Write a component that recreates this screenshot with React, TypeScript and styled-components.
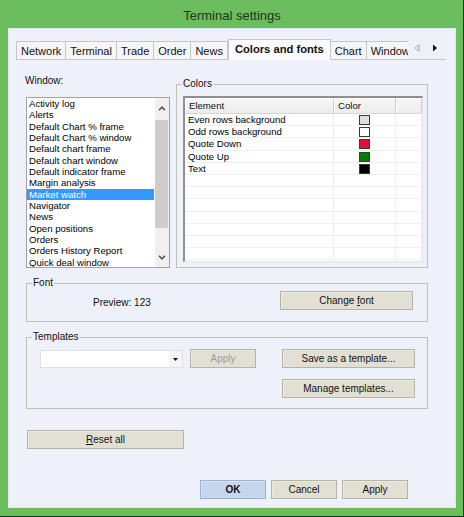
import React from "react";
import styled, { createGlobalStyle } from "styled-components";

const GlobalStyle = createGlobalStyle`
  html, body { margin: 0; padding: 0; background: #ffffff; }
  body { font-family: "Liberation Sans", Arial, sans-serif; }
  * { box-sizing: border-box; }
`;

const WINDOWS = [
  "Activity log",
  "Alerts",
  "Default Chart % frame",
  "Default Chart % window",
  "Default chart frame",
  "Default chart window",
  "Default indicator frame",
  "Margin analysis",
  "Market watch",
  "Navigator",
  "News",
  "Open positions",
  "Orders",
  "Orders History Report",
  "Quick deal window",
];

const TABS = ["Network", "Terminal", "Trade", "Order", "News", "Colors and fonts", "Chart", "Windows"];

const ELEMENTS = [
  { name: "Even rows background", color: "#dedede" },
  { name: "Odd rows background", color: "#ffffff" },
  { name: "Quote Down", color: "#dc143c" },
  { name: "Quote Up", color: "#007f00" },
  { name: "Text", color: "#000000" },
];

const Frame = styled.div`
  width: 464px;
  height: 517px;
  background: #6cbd5e;
  border-right: 1px solid #1c2a1c;
  border-bottom: 1px solid #1c2a1c;
  padding: 0 7px 8px 8px;
  display: flex;
  flex-direction: column;
`;

const TitleBar = styled.div`
  height: 28px;
  padding-top: 2px;
  display: flex;
  align-items: center;
  justify-content: center;
  font-size: 13px;
  color: #1c361c;
`;

const Client = styled.div`
  height: 480px;
  background: #eef0fa;
  box-shadow: inset 0 0 0 1px #e2e5f0;
  display: flex;
  flex-direction: column;
`;

const TabBar = styled.div`
  height: 21px;
  margin: 11px 10px 0 8px;
  display: flex;
`;

const TabStrip = styled.div`
  width: 392px;
  height: 21px;
  display: flex;
  align-items: flex-end;
  overflow: hidden;
`;

const Tab = styled.div<{ $active?: boolean }>`
  flex: none;
  height: ${(p) => (p.$active ? "21px" : "19px")};
  padding: ${(p) => (p.$active ? "0 6px 2px" : "0 4px")};
  display: flex;
  align-items: center;
  font-size: ${(p) => (p.$active ? "11.2px" : "11px")};
  font-weight: ${(p) => (p.$active ? "bold" : "normal")};
  color: #111;
  white-space: nowrap;
  background: ${(p) => (p.$active ? "#fbfbfd" : "#f6f6f8")};
  border: 1px solid #c6c6c6;
  border-bottom-color: ${(p) => (p.$active ? "transparent" : "#c6c6c6")};
  border-left-width: ${(p) => (p.$active ? "1px" : "0")};
  &:first-child { border-left-width: 1px; }
`;

const Arrows = styled.div`
  flex: 1;
  height: 21px;
  border-bottom: 1px solid #c6c6c6;
  display: flex;
  align-items: center;
  gap: 12px;
  padding: 0 0 2px 6px;
`;

const Panel = styled.div`
  margin: 0 10px 0 8px;
  padding: 0 18px 0 10px;
  display: flex;
  flex-direction: column;
`;

const TopRow = styled.div`
  padding-top: 15px;
  display: flex;
  gap: 6px;
`;

const WindowColumn = styled.div`
  width: 144px;
  display: flex;
  flex-direction: column;
`;

const Label = styled.div`
  height: 12px;
  line-height: 12px;
  font-size: 10px;
  color: #111;
  margin: 0 0 10px -1px;
`;

const ListBox = styled.div`
  height: 171px;
  border: 1px solid #a3a3a3;
  background: #fff;
  display: flex;
`;

const Items = styled.div`
  flex: 1;
  display: flex;
  flex-direction: column;
  overflow: hidden;
`;

const Item = styled.div<{ $selected?: boolean }>`
  height: 11.33px;
  line-height: 11.33px;
  padding-left: 2px;
  margin-right: 1px;
  font-size: 9.6px;
  white-space: nowrap;
  color: ${(p) => (p.$selected ? "#fff" : "#000")};
  background: ${(p) => (p.$selected ? "#3399ff" : "transparent")};
`;

const ScrollBar = styled.div`
  width: 14px;
  background: #f0f0f0;
  display: flex;
  flex-direction: column;
`;

const ScrollButton = styled.div`
  height: 20px;
  display: flex;
  align-items: center;
  justify-content: center;
`;

const Track = styled.div`
  flex: 1;
  padding-top: 2px;
`;

const Thumb = styled.div`
  height: 108px;
  margin: 0 1px 0 0;
  background: #cdcdcd;
`;

const Group = styled.fieldset<{ $w: number; $h: number; $pad: string }>`
  width: ${(p) => p.$w}px;
  height: ${(p) => p.$h}px;
  margin: 0;
  padding: ${(p) => p.$pad};
  border: 1px solid #c0c0b4;
  min-width: 0;
`;

const Legend = styled.legend`
  padding: 0 1px;
  margin-left: -1px;
  height: 12px;
  line-height: 12px;
  font-size: 10px;
  color: #111;
`;

const Grid = styled.div`
  height: 166px;
  background: #fff;
  border-top: 2px solid #8f8f8f;
  border-left: 2px solid #8f8f8f;
  border-right: 1px solid #e6e6e6;
  border-bottom: 1px solid #e6e6e6;
  overflow: hidden;
`;

const HeaderRow = styled.div`
  height: 16px;
  display: flex;
  background: linear-gradient(#f7f7f7, #ececec);
  border-bottom: 1px solid #d8d8d8;
`;

const HeaderCell = styled.div<{ $w?: number }>`
  ${(p) => (p.$w ? `width: ${p.$w}px;` : "flex: 1;")}
  padding-left: 4px;
  line-height: 15px;
  font-size: 9.6px;
  color: #111;
  border-right: 1px solid #d0d0d0;
  box-shadow: inset 1px 1px 0 #ffffff;
`;

const Row = styled.div`
  height: 12.2px;
  display: flex;
  border-bottom: 1px solid #efefef;
`;

const Cell = styled.div<{ $w?: number; $center?: boolean }>`
  ${(p) => (p.$w ? `width: ${p.$w}px;` : "flex: 1;")}
  padding-left: ${(p) => (p.$center ? "0" : "3px")};
  display: flex;
  align-items: center;
  justify-content: ${(p) => (p.$center ? "center" : "flex-start")};
  font-size: 9.6px;
  color: #000;
  white-space: nowrap;
  border-right: 1px solid #efefef;
`;

const Swatch = styled.div<{ $color: string }>`
  width: 11px;
  height: 10px;
  margin-top: 1px;
  background: ${(p) => p.$color};
  border: 1px solid #3a3a3a;
`;

const FontRow = styled.div`
  display: flex;
  align-items: flex-start;
`;

const Preview = styled.div`
  margin: 6px 0 0 60px;
  line-height: 12px;
  font-size: 10px;
  color: #111;
`;

const Button = styled.div<{ $w: number; $primary?: boolean; $disabled?: boolean }>`
  width: ${(p) => p.$w}px;
  height: 19px;
  display: flex;
  align-items: center;
  justify-content: center;
  font-size: 10px;
  font-weight: ${(p) => (p.$primary ? "bold" : "normal")};
  color: ${(p) => (p.$disabled ? "#9c9c9c" : "#111")};
  background: ${(p) => (p.$primary ? "#c5d6ef" : "#e1e0d3")};
  border: 1px solid ${(p) => (p.$primary ? "#9cb0cf" : "#b5b4a8")};
  box-shadow: inset 1px 1px 0 ${(p) => (p.$primary ? "#d6e3f6" : "#eceadf")};
  flex: none;
  u { text-decoration: underline; }
`;

const Spacer = styled.div`
  flex: 1;
`;

const TemplatesBody = styled.div`
  display: flex;
  align-items: flex-start;
`;

const ButtonStack = styled.div`
  display: flex;
  flex-direction: column;
  gap: 11px;
`;

const Combo = styled.div`
  width: 143px;
  height: 18px;
  margin: 1px 7px 0 7px;
  background: #fff;
  border: 1px solid #e0e0e0;
  display: flex;
  justify-content: flex-end;
`;

const ComboArrow = styled.div`
  width: 13px;
  background: #f5f5f5;
  display: flex;
  align-items: center;
  justify-content: center;
`;

const Section = styled.div<{ $top: number; $left?: number }>`
  margin-top: ${(p) => p.$top}px;
  margin-left: ${(p) => p.$left ?? 0}px;
`;

const Footer = styled.div`
  margin-top: 31px;
  padding-right: 48px;
  display: flex;
  justify-content: flex-end;
  gap: 5px;
`;

const Chevron = ({ up }: { up?: boolean }) => (
  <svg width="8" height="5" viewBox="0 0 8 5">
    <path
      d={up ? "M1 4.2 L4 1.2 L7 4.2" : "M1 0.8 L4 3.8 L7 0.8"}
      fill="none"
      stroke="#555"
      strokeWidth="1.6"
    />
  </svg>
);

export default function App() {
  return (
    <>
      <GlobalStyle />
      <Frame>
        <TitleBar>Terminal settings</TitleBar>
        <Client>
          <TabBar>
            <TabStrip>
              {TABS.map((t) => (
                <Tab key={t} $active={t === "Colors and fonts"}>
                  {t}
                </Tab>
              ))}
            </TabStrip>
            <Arrows>
              <svg width="6" height="8" viewBox="0 0 6 8">
                <path d="M5 0.8 L1 4 L5 7.2 Z" fill="none" stroke="#a8a8a8" strokeWidth="1" />
              </svg>
              <svg width="6" height="8" viewBox="0 0 6 8">
                <path d="M1 0.5 L5 4 L1 7.5 Z" fill="#111" />
              </svg>
            </Arrows>
          </TabBar>

          <Panel>
            <TopRow>
              <WindowColumn>
                <Label>Window:</Label>
                <ListBox>
                  <Items>
                    {WINDOWS.map((w) => (
                      <Item key={w} $selected={w === "Market watch"}>
                        {w}
                      </Item>
                    ))}
                  </Items>
                  <ScrollBar>
                    <ScrollButton>
                      <Chevron up />
                    </ScrollButton>
                    <Track>
                      <Thumb />
                    </Track>
                    <ScrollButton>
                      <Chevron />
                    </ScrollButton>
                  </ScrollBar>
                </ListBox>
              </WindowColumn>

              <Section $top={3}>
                <Group $w={252} $h={190} $pad="6px 4px 5px 6px">
                  <Legend>Colors</Legend>
                  <Grid>
                    <HeaderRow>
                      <HeaderCell $w={149}>Element</HeaderCell>
                      <HeaderCell $w={62}>Color</HeaderCell>
                      <HeaderCell />
                    </HeaderRow>
                    {Array.from({ length: 12 }).map((_, i) => {
                      const el = ELEMENTS[i];
                      return (
                        <Row key={i}>
                          <Cell $w={149}>{el ? el.name : ""}</Cell>
                          <Cell $w={62} $center>
                            {el && <Swatch $color={el.color} />}
                          </Cell>
                          <Cell />
                        </Row>
                      );
                    })}
                  </Grid>
                </Group>
              </Section>
            </TopRow>

            <Section $top={9}>
              <Group $w={402} $h={45} $pad="2px 14px 11px 6px">
                <Legend>Font</Legend>
                <FontRow>
                  <Preview>Preview: 123</Preview>
                  <Spacer />
                  <Button $w={133}>
                    <span>
                      Change <u>f</u>ont
                    </span>
                  </Button>
                </FontRow>
              </Group>
            </Section>

            <Section $top={9}>
              <Group $w={402} $h={78} $pad="6px 12px 10px 6px">
                <Legend>Templates</Legend>
                <TemplatesBody>
                  <Combo>
                    <ComboArrow>
                      <svg width="5" height="3" viewBox="0 0 5 3">
                        <path d="M0 0 L5 0 L2.5 3 Z" fill="#111" />
                      </svg>
                    </ComboArrow>
                  </Combo>
                  <Button $w={66} $disabled>
                    Apply
                  </Button>
                  <Spacer />
                  <ButtonStack>
                    <Button $w={133}>Save as a template...</Button>
                    <Button $w={133}>Manage templates...</Button>
                  </ButtonStack>
                </TemplatesBody>
              </Group>
            </Section>

            <Section $top={21} $left={1}>
              <Button $w={157}>
                <span>
                  <u>R</u>eset all
                </span>
              </Button>
            </Section>
          </Panel>

          <Footer>
            <Button $w={66} $primary>
              OK
            </Button>
            <Button $w={66}>Cancel</Button>
            <Button $w={66}>Apply</Button>
          </Footer>
        </Client>
      </Frame>
    </>
  );
}
